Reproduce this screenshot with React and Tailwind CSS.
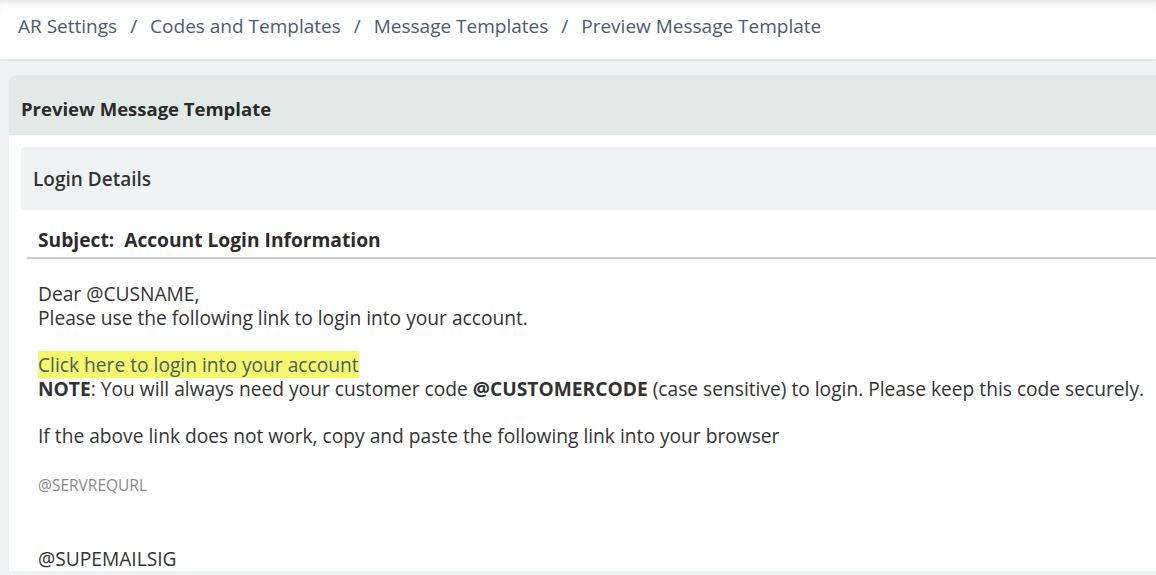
import React from "react";

function Breadcrumb() {
  const items = ["AR Settings", "Codes and Templates", "Message Templates", "Preview Message Template"];
  return (
    <div className="h-[61px] bg-white border-b-2 border-[#e3e6e8] shadow-[inset_0_8px_8px_-6px_rgba(0,0,0,0.12)] flex items-center pl-[18px] pb-[7px] text-[19px] text-[#4a5b73]">
      {items.map((item, i) => (
        <React.Fragment key={item}>
          {i > 0 && <span className="mx-[13px]">/</span>}
          <span>{item}</span>
        </React.Fragment>
      ))}
    </div>
  );
}

export default function App() {
  return (
    <div className="min-h-[575px] bg-[#eff3f4] text-[#2e2e2e] overflow-hidden" style={{ fontFamily: '"Open Sans", "Noto Sans", sans-serif' }}>
      <Breadcrumb />
      <div className="pt-[14px] pl-[9px]">
        <div className="rounded-tl-[6px] bg-white -mr-4">
          <div className="h-[60px] rounded-tl-[6px] bg-[#e2eae8] flex items-center pl-[12px] pt-[7px] text-[18.5px] font-bold text-[#2b2b2b]">
            Preview Message Template
          </div>
          <div className="pt-[12px] pl-[12px]">
            <div className="h-[63px] rounded-tl-[4px] bg-[#eff3f4] flex items-center pl-[12px] pt-[1px] text-[19px] font-semibold text-[#333]">
              Login Details
            </div>
            <div className="pl-[6px]">
              <div className="h-[49px] flex items-end pb-[2px] pl-[11px] border-b-2 border-[#c9cdd1] text-[19.2px] font-bold text-[#2b2b2b]">
                Subject:&nbsp; Account Login Information
              </div>
              <div className="pl-[11px] pt-[23px] text-[19.2px] leading-[24px] text-[#333]">
                <div>Dear @CUSNAME,</div>
                <div>Please use the following link to login into your account.</div>
                <div className="h-[23px]" />
                <div>
                  <span className="bg-[#f5f86e] text-[#4a6060]">Click here to login into your account</span>
                </div>
                <div>
                  <b>NOTE</b>: You will always need your customer code <b>@CUSTOMERCODE</b> (case sensitive) to login. Please keep this code securely.
                </div>
                <div className="h-[23px]" />
                <div>If the above link does not work, copy and paste the following link into your browser</div>
                <div className="pt-[25px] text-[15.5px] text-[#8a8a8a]">@SERVREQURL</div>
                <div className="pt-[50px]">@SUPEMAILSIG</div>
              </div>
            </div>
          </div>
        </div>
      </div>
    </div>
  );
}
